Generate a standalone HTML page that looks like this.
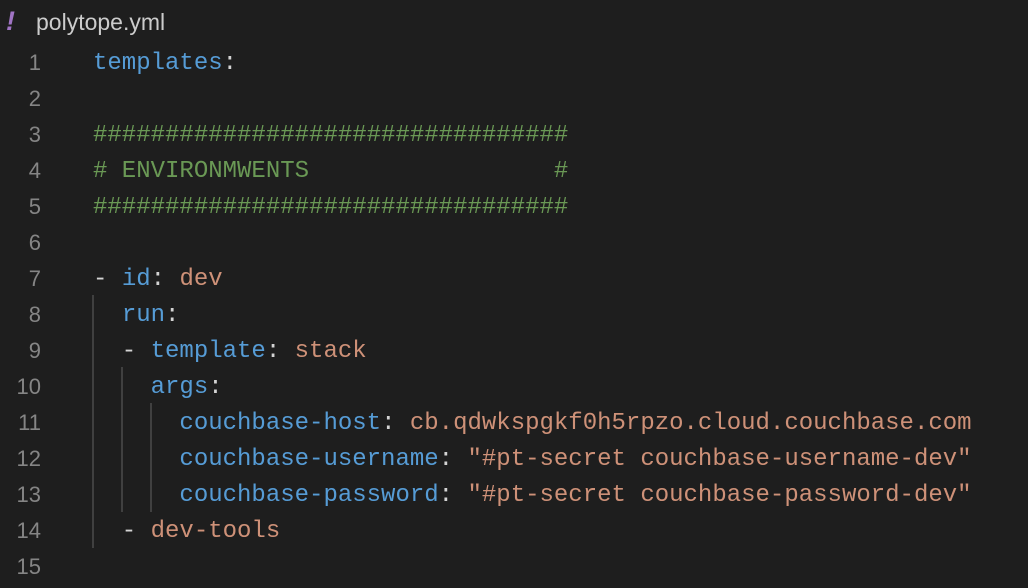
<!DOCTYPE html>
<html><head><meta charset="utf-8"><style>
html,body{margin:0;padding:0;background:#1e1e1e;width:1028px;height:588px;overflow:hidden}
.t{position:absolute;left:36px;top:9px;font:23px "Liberation Sans",sans-serif;color:#cccccc}
.bang{position:absolute;left:6px;top:6px;font:italic bold 27px "Liberation Sans",sans-serif;color:#a074c4}
.ln{position:absolute;left:0;width:41px;text-align:right;font:22px "Liberation Sans",sans-serif;color:#858585;line-height:36px;margin-top:1px}
.c{position:absolute;left:93px;font:24px "Liberation Mono",monospace;line-height:36px;white-space:pre;color:#d4d4d4;margin-top:2px}
.k{color:#569cd6}.s{color:#ce9178}.g{color:#6a9955}
.ig{position:absolute;width:2px;background:#404040}
</style></head><body>
<div class="bang">!</div><div class="t">polytope.yml</div>
<div class="ln" style="top:44px">1</div>
<div class="ln" style="top:80px">2</div>
<div class="ln" style="top:116px">3</div>
<div class="ln" style="top:152px">4</div>
<div class="ln" style="top:188px">5</div>
<div class="ln" style="top:224px">6</div>
<div class="ln" style="top:260px">7</div>
<div class="ln" style="top:296px">8</div>
<div class="ln" style="top:332px">9</div>
<div class="ln" style="top:368px">10</div>
<div class="ln" style="top:404px">11</div>
<div class="ln" style="top:440px">12</div>
<div class="ln" style="top:476px">13</div>
<div class="ln" style="top:512px">14</div>
<div class="ln" style="top:548px">15</div>
<div class="ig" style="left:92px;top:295px;height:253px"></div>
<div class="ig" style="left:121px;top:367px;height:145px"></div>
<div class="ig" style="left:150px;top:403px;height:109px"></div>
<div class="c" style="top:44px"><span class="k">templates</span>:</div>
<div class="c g" style="top:116px">#################################</div>
<div class="c g" style="top:152px"># ENVIRONMWENTS                 #</div>
<div class="c g" style="top:188px">#################################</div>
<div class="c" style="top:260px">- <span class="k">id</span>: <span class="s">dev</span></div>
<div class="c" style="top:296px">  <span class="k">run</span>:</div>
<div class="c" style="top:332px">  - <span class="k">template</span>: <span class="s">stack</span></div>
<div class="c" style="top:368px">    <span class="k">args</span>:</div>
<div class="c" style="top:404px">      <span class="k">couchbase-host</span>: <span class="s">cb.qdwkspgkf0h5rpzo.cloud.couchbase.com</span></div>
<div class="c" style="top:440px">      <span class="k">couchbase-username</span>: <span class="s">"#pt-secret couchbase-username-dev"</span></div>
<div class="c" style="top:476px">      <span class="k">couchbase-password</span>: <span class="s">"#pt-secret couchbase-password-dev"</span></div>
<div class="c" style="top:512px">  - <span class="s">dev-tools</span></div>
</body></html>
